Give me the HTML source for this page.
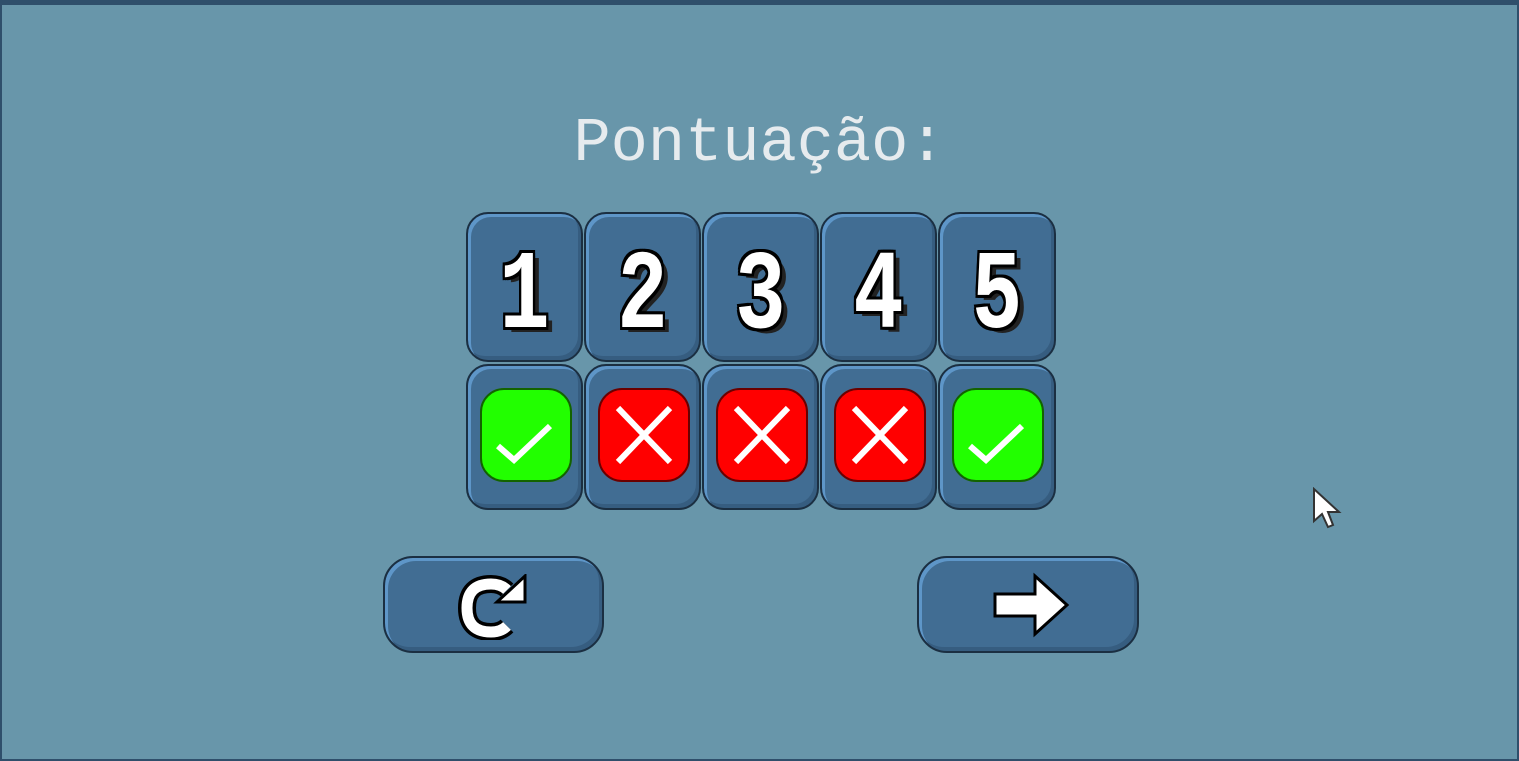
<!DOCTYPE html>
<html><head><style>
body{margin:0;width:1519px;height:761px;overflow:hidden;background:#6896aa;position:relative;font-family:"Liberation Sans",sans-serif}
.frame{position:absolute;left:0;top:0;width:1515px;height:754px;border:2px solid #2f4f6b;border-top-width:5px;}
.t{position:absolute;background:#416d93;border:2px solid #1b2f42;border-radius:22px;box-sizing:border-box;box-shadow:inset 3px 3px 0 #5e96c8,inset -3px -4px 0 #365d80;}
.d{position:absolute;color:#fff;font:bold 112px "Liberation Mono",monospace;text-align:center;width:100%;top:24px;transform:scaleX(0.75);line-height:120px;
text-shadow:-3px 0 #000,3px 0 #000,0 -3px #000,0 3px #000,-3px -3px #000,3px 3px #000,-3px 3px #000,3px -3px #000,8px 5px #222}
.ic{position:absolute;left:12px;top:22px;width:92px;height:94px;border-radius:24px;box-sizing:border-box}
.g{background:#22ff00;border:2px solid #136300}
.r{background:#ff0000;border:2px solid #6a0000}
h1{position:absolute;top:109px;left:0;width:1519px;text-align:center;margin:0;font:normal 62px "Liberation Mono",monospace;color:#e6ebee;line-height:70px}
</style></head><body>
<div class="frame"></div>
<h1>Pontuação:</h1>
<div class="t" style="left:466px;top:212px;width:117px;height:150px"><div class="d">1</div></div>
<div class="t" style="left:584px;top:212px;width:117px;height:150px"><div class="d">2</div></div>
<div class="t" style="left:702px;top:212px;width:117px;height:150px"><div class="d">3</div></div>
<div class="t" style="left:820px;top:212px;width:117px;height:150px"><div class="d">4</div></div>
<div class="t" style="left:938px;top:212px;width:118px;height:150px"><div class="d">5</div></div>

<div class="t" style="left:466px;top:364px;width:117px;height:146px"><div class="ic g"><svg width="88" height="90"><path d="M16 56 L32 70 L68 36" stroke="#fff" stroke-width="6" fill="none"/></svg></div></div>
<div class="t" style="left:584px;top:364px;width:117px;height:146px"><div class="ic r"><svg width="88" height="90"><path d="M18 18 L70 72 M70 18 L18 72" stroke="#fff" stroke-width="6" fill="none"/></svg></div></div>
<div class="t" style="left:702px;top:364px;width:117px;height:146px"><div class="ic r"><svg width="88" height="90"><path d="M18 18 L70 72 M70 18 L18 72" stroke="#fff" stroke-width="6" fill="none"/></svg></div></div>
<div class="t" style="left:820px;top:364px;width:117px;height:146px"><div class="ic r"><svg width="88" height="90"><path d="M18 18 L70 72 M70 18 L18 72" stroke="#fff" stroke-width="6" fill="none"/></svg></div></div>
<div class="t" style="left:938px;top:364px;width:118px;height:146px"><div class="ic g"><svg width="88" height="90"><path d="M16 56 L32 70 L68 36" stroke="#fff" stroke-width="6" fill="none"/></svg></div></div>

<div class="t" style="left:383px;top:556px;width:221px;height:97px;border-radius:30px">
<svg style="position:absolute;left:72px;top:16px" width="80" height="66"><path d="M50 16 Q44 10 34 10 Q10 10 10 34 Q10 58 34 58 Q44 58 50 52" stroke="#000" stroke-width="18" fill="none"/><path d="M50 16 Q44 10 34 10 Q10 10 10 34 Q10 58 34 58 Q44 58 50 52" stroke="#fff" stroke-width="11" fill="none"/><path d="M40 28 L68 28 L68 2 Z" fill="#fff" stroke="#000" stroke-width="3"/></svg>
</div>
<div class="t" style="left:917px;top:556px;width:222px;height:97px;border-radius:30px">
<svg style="position:absolute;left:72px;top:14px" width="82" height="66"><path d="M4 22 H44 V4 L76 33 L44 62 V44 H4 Z" fill="#fff" stroke="#000" stroke-width="3"/></svg>
</div>
<svg style="position:absolute;left:1312px;top:487px" width="34" height="46"><path d="M2 2 V34 L10 27 L16 40 L21 38 L16 25 L27 25 Z" fill="#fff" stroke="#333" stroke-width="2"/></svg>
</body></html>
